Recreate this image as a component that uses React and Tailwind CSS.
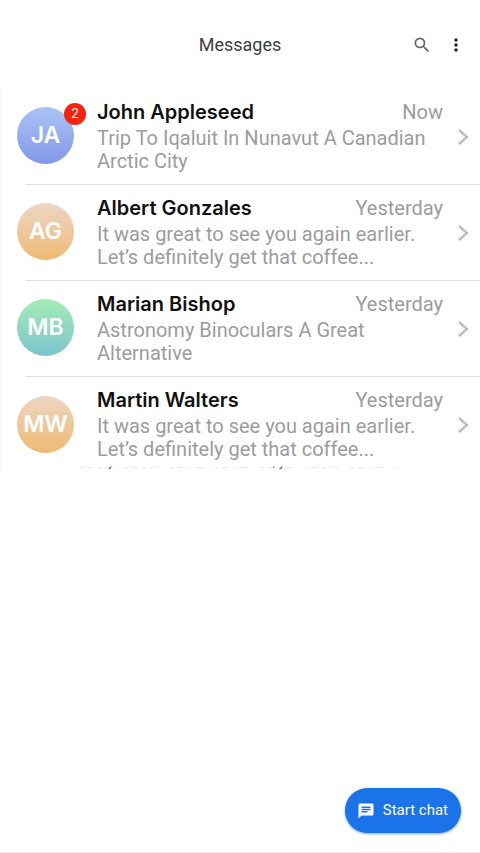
import { MdChat, MdMoreVert, MdSearch } from 'react-icons/md';

const CONVERSATIONS = [
  {
    initials: 'JA',
    name: 'John Appleseed',
    time: 'Now',
    preview: 'Trip To Iqaluit In Nunavut A Canadian Arctic City',
    unread: 2,
    color: 'from-[#abc3f2] to-[#8298ea]',
  },
  {
    initials: 'AG',
    name: 'Albert Gonzales',
    time: 'Yesterday',
    preview: 'It was great to see you again earlier. Let’s definitely get that coffee...',
    color: 'from-[#ecd6c4] to-[#f0b971]',
  },
  {
    initials: 'MB',
    name: 'Marian Bishop',
    time: 'Yesterday',
    preview: 'Astronomy Binoculars A Great Alternative',
    color: 'from-[#a5ecb4] to-[#7cc3cd]',
  },
  {
    initials: 'MW',
    name: 'Martin Walters',
    time: 'Yesterday',
    preview: 'It was great to see you again earlier. Let’s definitely get that coffee...',
    color: 'from-[#ecd6c4] to-[#f0b971]',
  },
];

const Avatar = ({ initials, color, unread }) => (
  <div className={`relative size-[57px] mb-0.5 shrink-0 rounded-full bg-linear-to-b flex items-center justify-center ${color}`}>
    <span className="text-[23px] font-semibold text-white">{initials}</span>
    {unread && (
      <span className="absolute -top-1 -right-3 size-[22px] rounded-full bg-[#f8220f] text-white text-[13px] flex items-center justify-center">
        {unread}
      </span>
    )}
  </div>
);

const Chevron = () => (
  <svg viewBox="0 0 12 18" className="w-3 h-[18px] shrink-0" fill="none" stroke="#bdbdbf" strokeWidth="2.4" aria-hidden="true">
    <path d="M2 2l8 7-8 7" />
  </svg>
);

// Torn lower edge under the last row
const EdgeMarks = () => (
  <svg viewBox="0 0 324 4" className="w-[324px] h-1 mx-auto" fill="none" aria-hidden="true">
    <path d="M2 1.5H324" stroke="#e9e9e9" strokeDasharray="4 3 6 5 3 4 8 12" />
    <path d="M33 .5q-.5 2-2.5 2.5M196 .5l-.5 1.5M204 .5q-.5 2-2.5 2.5" stroke="#6f6f6f" strokeWidth="1.2" />
  </svg>
);

const Conversation = ({ chat, last }) => (
  <li className="h-24 flex flex-col">
    <a href="#" className="flex-1 flex items-center pl-4 pr-[11px]">
      <Avatar initials={chat.initials} color={chat.color} unread={chat.unread} />
      <div className="flex-1 min-w-0 ml-[23px] self-start pt-[9px]">
        <div className="flex items-center justify-between pr-[14px]">
          <span className="text-xl leading-7 font-semibold text-[#111111]">{chat.name}</span>
          <span className="font-['Roboto',sans-serif] text-xl leading-7 text-[#9c9c9e]">{chat.time}</span>
        </div>
        <p className="font-['Roboto',sans-serif] text-xl leading-[23px] text-[#9c9c9e] mt-px pr-6">{chat.preview}</p>
      </div>
      <Chevron />
    </a>
    {!last && <div className="ml-[25px] h-px bg-[#dededf]" />}
  </li>
);

export default function App() {
  return (
    <div className="min-h-screen bg-white flex flex-col font-['Inter',sans-serif]">
      <header className="h-[89px] grid grid-cols-[1fr_auto_1fr] items-center">
        <h1 className="col-start-2 font-['Roboto',sans-serif] text-lg text-[#3c4043]">Messages</h1>
        <div className="flex justify-end gap-[14px] pr-[14px]">
          <button type="button" aria-label="Search" className="text-[#5f6368]">
            <MdSearch size={20} />
          </button>
          <button type="button" aria-label="More options" className="text-[#202124]">
            <MdMoreVert size={20} />
          </button>
        </div>
      </header>

      <main className="flex-1">
        <ul className="border-l border-[#f7f7f7]">
          {CONVERSATIONS.map((chat, i) => (
            <Conversation key={chat.name} chat={chat} last={i === CONVERSATIONS.length - 1} />
          ))}
        </ul>
        <div className="-mt-[7px]">
          <EdgeMarks />
        </div>
      </main>

      <footer className="flex justify-end pr-[19px] pb-[19px] border-b border-[#f1f1f1]">
        <button
          type="button"
          className="h-[45px] pl-3 pr-[13px] rounded-full bg-[#1a73e8] text-white flex items-center gap-2 shadow-sm shadow-[#1a73e8]/50 font-['Roboto',sans-serif] text-[15px]"
        >
          <MdChat size={18} />
          Start chat
        </button>
      </footer>
    </div>
  );
}
